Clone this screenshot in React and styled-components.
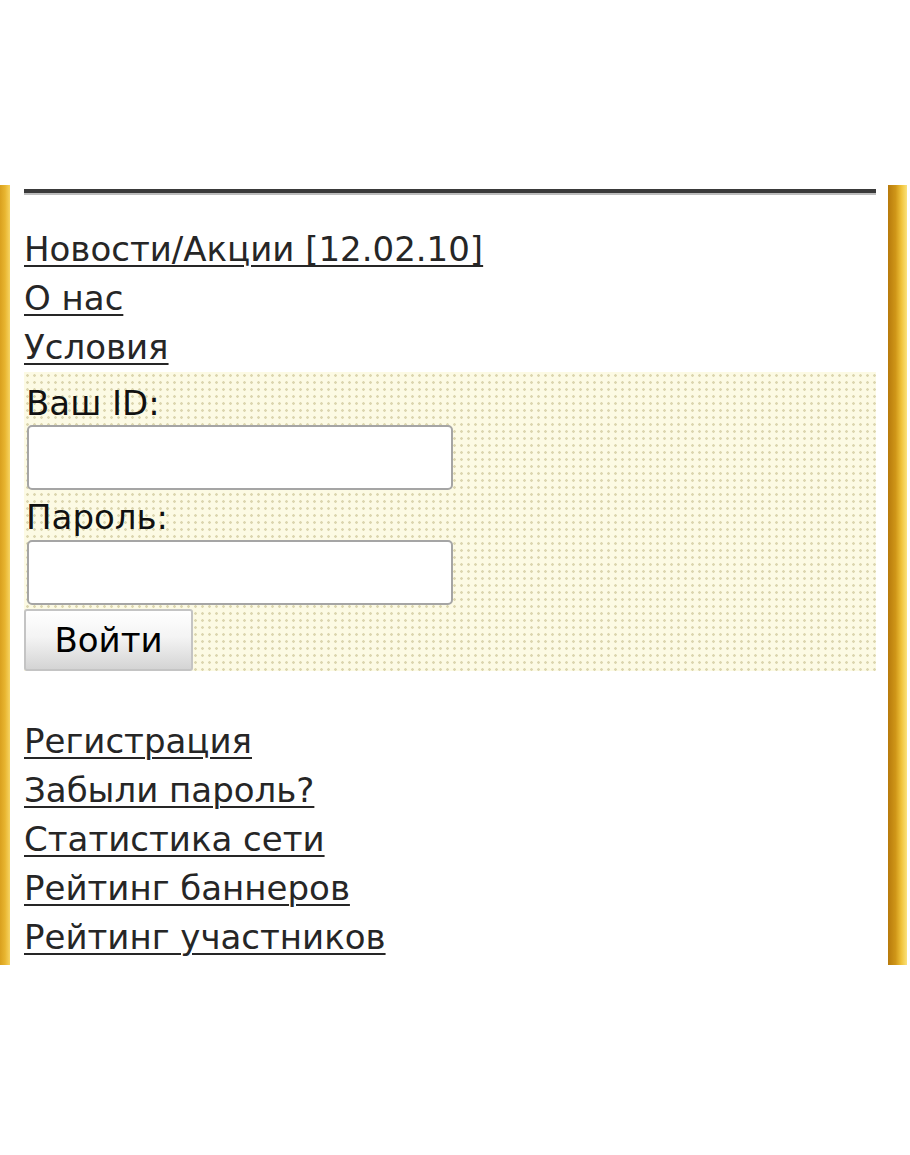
import React from "react";
import styled, { createGlobalStyle } from "styled-components";

const Global = createGlobalStyle`
  html, body { margin: 0; padding: 0; background: #fff; }
  body { font-family: "DejaVu Sans", Tahoma, Verdana, sans-serif; }
`;

const Page = styled.div`
  padding-top: 185px;
  width: 910px;
`;

const Frame = styled.div`
  display: flex;
  align-items: stretch;
  width: 907px;
`;

const LeftBar = styled.div`
  width: 10px;
  flex: none;
  background: linear-gradient(to right, #d9a01e 0%, #e8b530 50%, #f7d462 100%);
`;

const RightBar = styled.div`
  width: 19px;
  flex: none;
  background: linear-gradient(to right, #b77a0c 0%, #cf9618 40%, #efc23a 70%, #fbe27a 100%);
`;

const Content = styled.div`
  flex: 1;
  padding: 4px 12px 3px 14px;
`;

const Rule = styled.div`
  height: 4px;
  background: #3a3a3a;
  border-bottom: 2px solid #bdbdbd;
  margin-bottom: 30px;
`;

const LinkList = styled.div`
  display: flex;
  flex-direction: column;
`;

const NavLink = styled.a`
  font-size: 34px;
  line-height: 49px;
  color: #262626;
  text-decoration: underline;
  text-decoration-thickness: 2px;
  text-underline-offset: 4px;
  align-self: flex-start;
  cursor: pointer;
`;

const LoginBox = styled.form`
  background-color: #fcfae4;
  background-image: radial-gradient(circle, #dcd6b0 1px, transparent 1.6px);
  background-size: 7px 7px;
  display: flex;
  flex-direction: column;
  align-items: flex-start;
`;

const Label = styled.label`
  font-size: 34px;
  line-height: ${(p) => p.$lh}px;
  padding-top: ${(p) => p.$top}px;
  color: #111;
  padding-left: 2px;
`;

const Input = styled.input`
  box-sizing: border-box;
  width: 426px;
  height: 65px;
  margin-left: 3px;
  border: 2px solid #a5a5a5;
  border-radius: 5px;
  background: #fff;
  font-size: 30px;
  outline: none;
`;

const Button = styled.button`
  box-sizing: border-box;
  margin-top: 4px;
  width: 169px;
  height: 62px;
  font-family: inherit;
  font-size: 34px;
  color: #000;
  border: 2px solid #c4c4c4;
  border-radius: 3px;
  background: linear-gradient(to bottom, #ffffff 0%, #f4f4f4 45%, #d4d4d4 100%);
  padding: 0;
`;

const BottomLinks = styled(LinkList)`
  margin-top: 46px;
`;

export default function App() {
  return (
    <Page>
      <Global />
      <Frame>
        <LeftBar />
        <Content>
          <Rule />
          <LinkList>
            <NavLink>Новости/Акции [12.02.10]</NavLink>
            <NavLink>О нас</NavLink>
            <NavLink>Условия</NavLink>
          </LinkList>
          <LoginBox onSubmit={(e) => e.preventDefault()}>
            <Label $top={9} $lh={44}>Ваш ID:</Label>
            <Input type="text" />
            <Label $top={4} $lh={46}>Пароль:</Label>
            <Input type="password" />
            <Button type="submit">Войти</Button>
          </LoginBox>
          <BottomLinks>
            <NavLink>Регистрация</NavLink>
            <NavLink>Забыли пароль?</NavLink>
            <NavLink>Статистика сети</NavLink>
            <NavLink>Рейтинг баннеров</NavLink>
            <NavLink>Рейтинг участников</NavLink>
          </BottomLinks>
        </Content>
        <RightBar />
      </Frame>
    </Page>
  );
}
